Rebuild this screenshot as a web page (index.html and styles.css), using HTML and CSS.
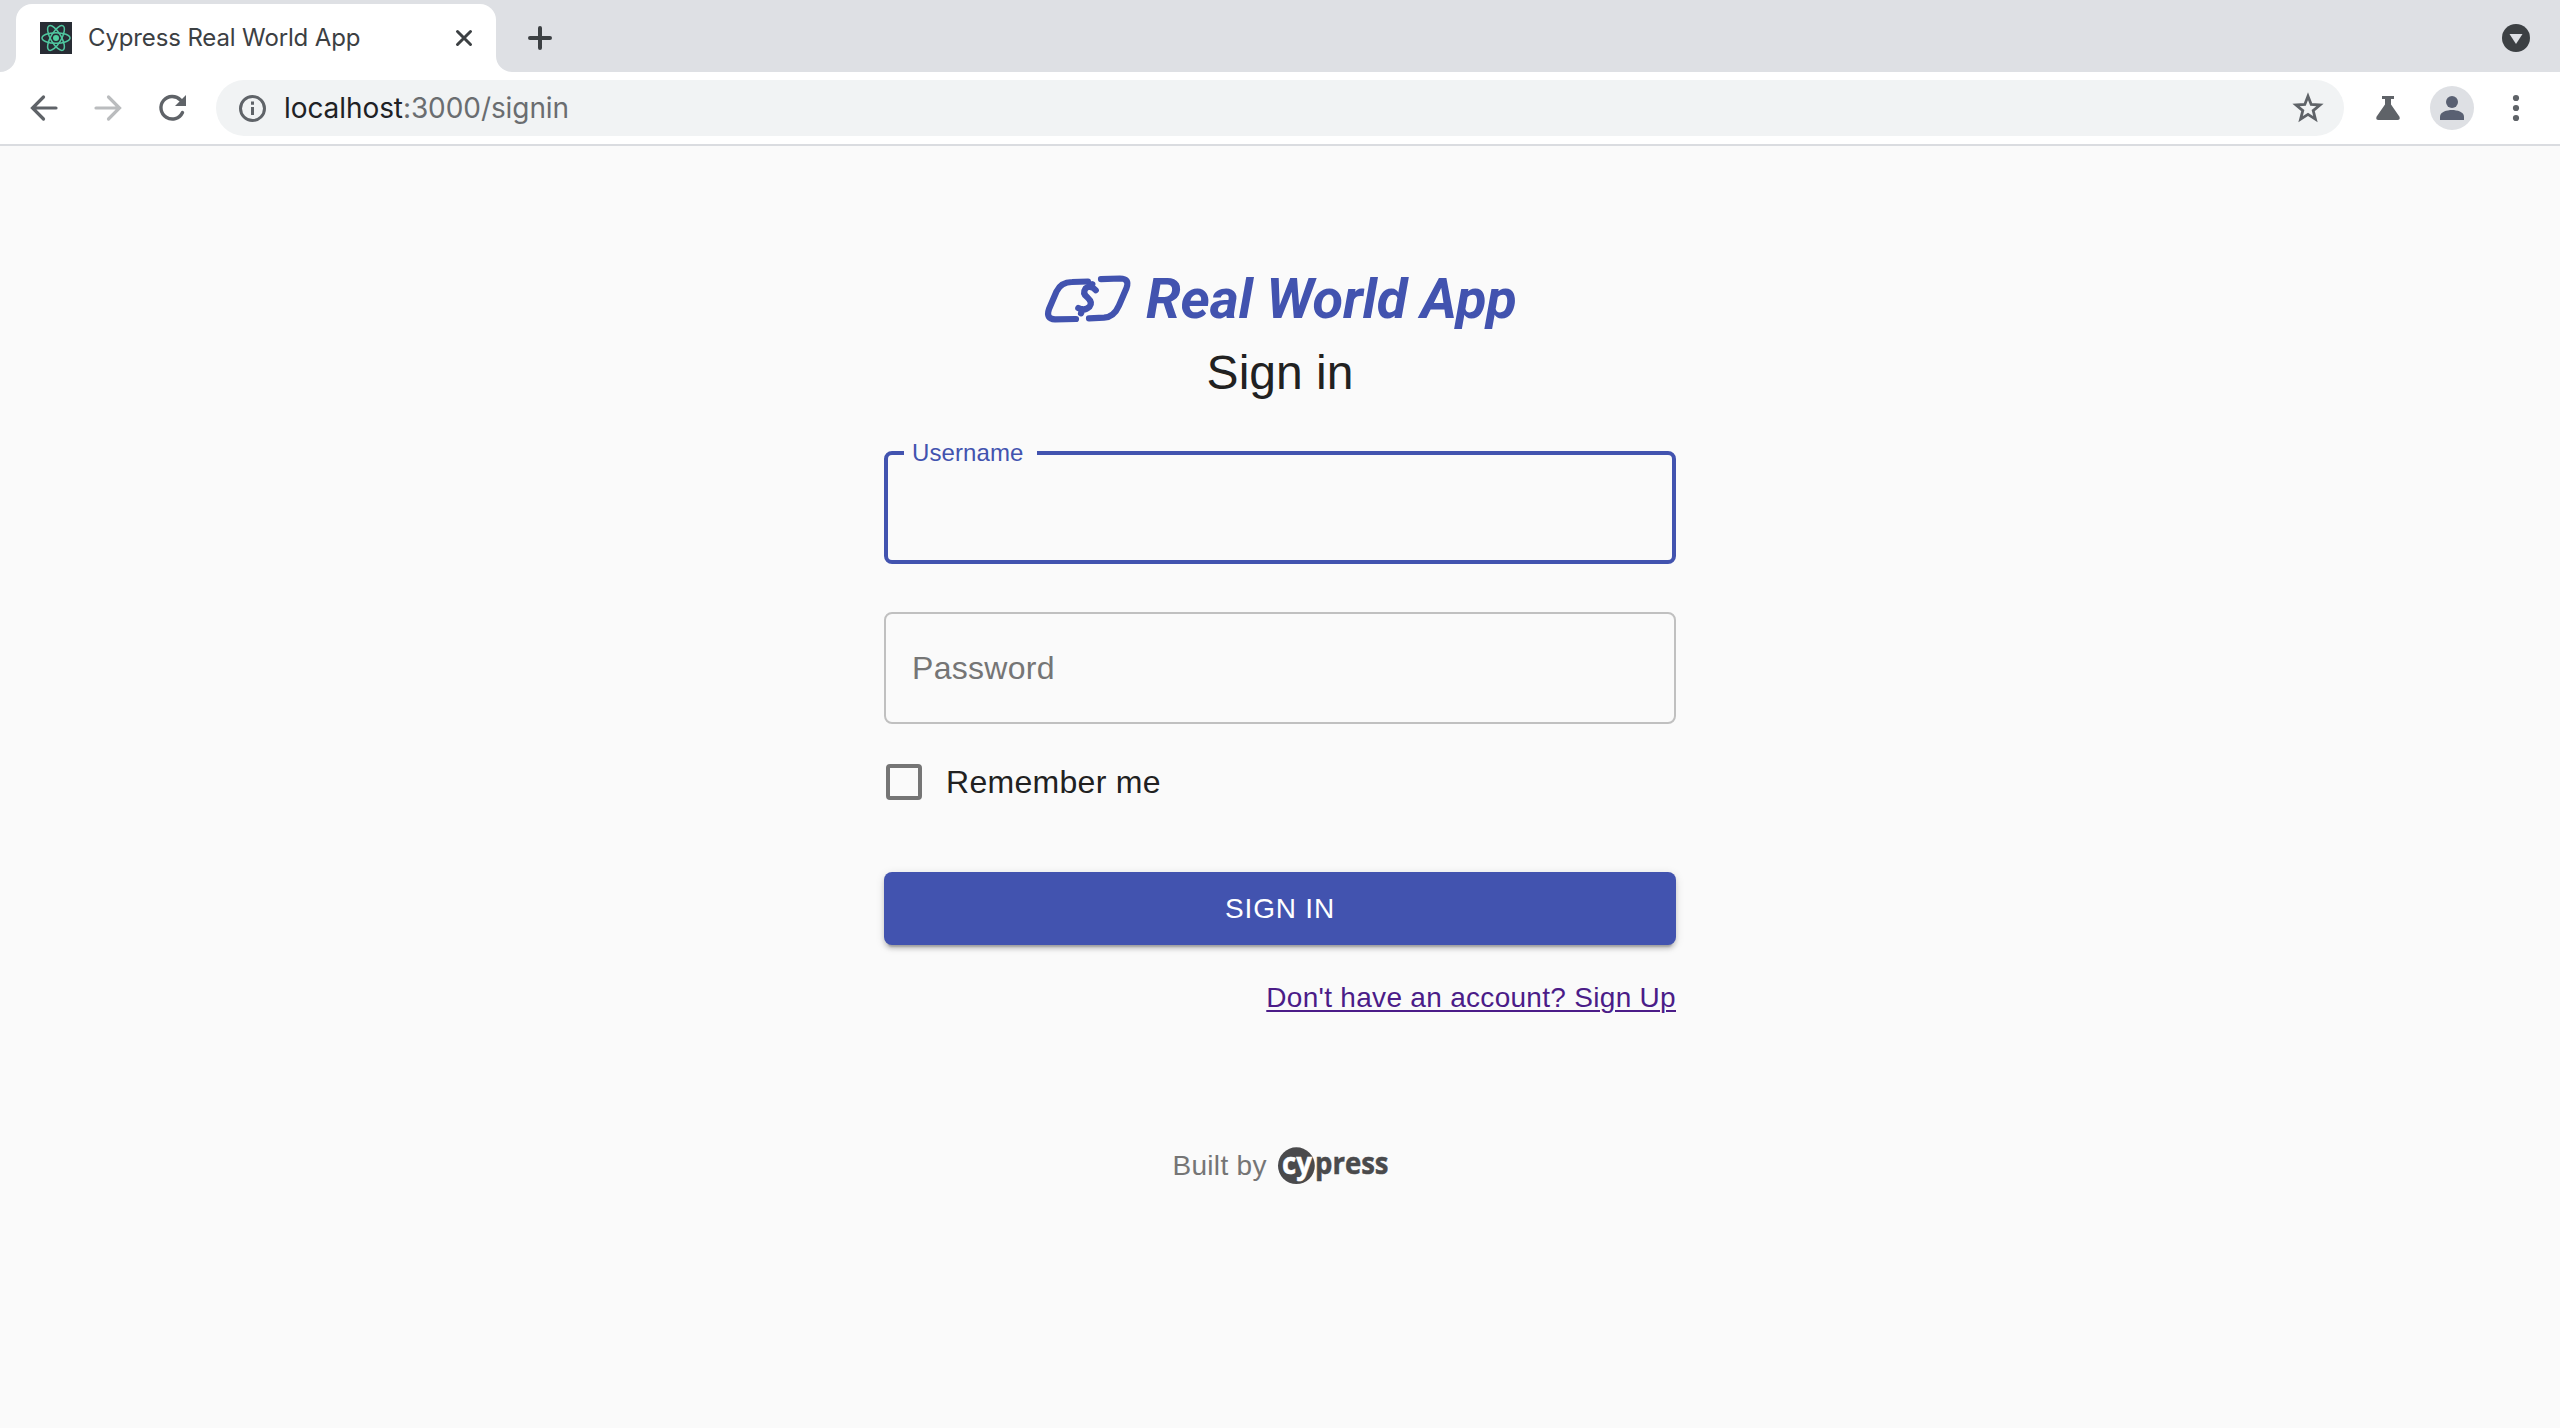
FILE: index.html
```html
<!DOCTYPE html>
<html lang="en">
<head>
<meta charset="utf-8">
<title>Cypress Real World App</title>
<link rel="stylesheet" href="styles.css">
</head>
<body>
<header class="tabstrip">
  <svg class="tab-foot" width="16" height="16" viewBox="0 0 16 16"><path d="M16 0v16H0A16 16 0 0 0 16 0z"/></svg>
  <div class="tab">
    <svg class="favicon" width="32" height="32" viewBox="0 0 32 32">
      <path fill="#282c34" d="M0 0h32v32H0z"/>
      <circle cx="16" cy="16" r="3" fill="#50d0a0"/>
      <g fill="none" stroke="#50c8a0" stroke-width="1.5">
        <ellipse cx="16" cy="16" rx="14" ry="5.3"/>
        <ellipse cx="16" cy="16" rx="14" ry="5.3" transform="rotate(60 16 16)"/>
        <ellipse cx="16" cy="16" rx="14" ry="5.3" transform="rotate(120 16 16)"/>
      </g>
    </svg>
    <span class="tab-title">Cypress Real World App</span>
    <svg class="tab-close" width="16" height="16" viewBox="0 0 16 16"><path d="M1.5 1.5l13 13m0-13l-13 13"/></svg>
  </div>
  <svg class="tab-foot" width="16" height="16" viewBox="0 0 16 16"><path d="M0 0v16h16A16 16 0 0 1 0 0z"/></svg>
  <svg class="new-tab" width="24" height="24" viewBox="0 0 24 24"><path d="M12 2v20M2 12h20"/></svg>
  <svg class="tab-search" width="28" height="28" viewBox="0 0 28 28"><circle cx="14" cy="14" r="14" fill="#3c4043"/><path fill="#dee0e4" d="M7.5 10h13L14 20z"/></svg>
</header>
<nav class="toolbar">
  <svg class="back" width="28" height="28" viewBox="0 0 28 28"><path d="M26 14H3M13.500 3L2.500 14l11 11"/></svg>
  <svg class="forward" width="28" height="28" viewBox="0 0 28 28"><path d="M2 14h23M14.500 3l11 11-11 11"/></svg>
  <svg class="reload" width="28" height="28" viewBox="0 0 28 28"><path class="arc" d="M24.500 18.500A11.300 11.300 0 1 1 22.500 6"/><path class="tip" d="M28 1v11h-11z"/></svg>
  <div class="omnibox">
    <svg class="info" width="28" height="28" viewBox="0 0 28 28"><circle cx="14.500" cy="14.500" r="12"/><path d="M14.500 13v8M14.500 7.500v3.200"/></svg>
    <span class="url">localhost<span class="url-path">:3000/signin</span></span>
    <svg class="star" width="32" height="32" viewBox="0 0 32 32"><path d="M16 4.200l3.200 8.200 8.800.6-6.800 5.600 2.200 8.500L16 22.400l-7.400 4.700 2.200-8.500L4 13l8.800-.6z"/></svg>
  </div>
  <svg class="flask" width="24" height="24" viewBox="0 0 24 24"><path d="M6 0h12v3h-3v5.500l8.500 12.300q1 3.200-2 3.200h-19q-3 0-2-3.200L9 8.500V3H6z"/></svg>
  <svg class="avatar" width="44" height="44" viewBox="0 0 44 44"><circle cx="22" cy="22" r="22" fill="#dee0e4"/><g fill="#596072"><circle cx="22" cy="16" r="6"/><path d="M10 34v-3.500c0-4.500 7-6.500 12-6.500s12 2 12 6.500V34z"/></g></svg>
  <svg class="menu" width="8" height="28" viewBox="0 0 8 28"><circle cx="4" cy="4" r="3.100"/><circle cx="4" cy="14" r="3.100"/><circle cx="4" cy="24" r="3.100"/></svg>
</nav>
<main class="page">
  <div class="brand">
    <svg class="brand-mark" width="88" height="52" viewBox="0 0 88 52">
      <path d="M44 8.500L28 9Q17 9 12.500 18.500L5 36Q1.500 46 11 46.300L32 46"/>
      <path d="M57 6.200L76 5.500Q86 5.500 82.500 15L75 32.500Q70 44 60 44.700L45 45.300"/>
      <path d="M51.800 17.300Q46 10.800 41.500 15.500 38 20.500 43.500 24.500 49 29.500 45.500 33.800 40.500 38.500 34.300 35M48.300 11.300l-1.500 2.700M37 40.300l1.500-4"/>
    </svg>
    <span class="brand-name">Real World App</span>
  </div>
  <h1 class="heading">Sign in</h1>
  <form class="form">
    <fieldset class="field focused"><legend class="legend">Username</legend></fieldset>
    <div class="field password">Password</div>
    <div class="remember"><span class="box"></span><span>Remember me</span></div>
    <div class="submit">SIGN IN</div>
    <a class="signup">Don't have an account? Sign Up</a>
  </form>
  <footer class="footer">
    <span>Built by</span>
    <svg class="cypress" width="108" height="44" viewBox="0 0 108 44">
      <circle cx="16.400" cy="21.700" r="18.400" fill="#4a4a4c"/>
      <text x="2" y="29.700" textLength="30" fill="#fff" stroke="#fff" lengthAdjust="spacingAndGlyphs">cy</text>
      <text x="35" y="29.700" textLength="73.500" lengthAdjust="spacingAndGlyphs" fill="#4a4a4c" stroke="#4a4a4c">press</text>
    </svg>
  </footer>
</main>
</body>
</html>
```
FILE: styles.css
```css
* { box-sizing: border-box; }
body { margin: 0; width: 2560px; height: 1428px; overflow: hidden; background: #fafafa; color: #212121; font-family: "Liberation Sans", Arial, sans-serif; }
svg { display: block; flex: none; overflow: visible; }
.tabstrip { display: flex; height: 72px; background: #dee0e4; align-items: flex-end; padding-right: 30px; }
.tab-foot { fill: #fff; }
.tab { display: flex; align-items: center; width: 480px; height: 68px; padding: 0 24px; background: #fff; border-radius: 16px 16px 0 0; }
.tab-title { flex: 1; margin-left: 16px; color: #3c4043; font: 24px/32px Inter, sans-serif; letter-spacing: -.13px; white-space: nowrap; }
.tab-close { stroke: #3c4043; stroke-width: 3; stroke-linecap: round; }
.new-tab { margin: 0 0 22px 16px; stroke: #3c4043; stroke-width: 4; stroke-linecap: round; }
.tab-search { margin: 0 0 20px auto; }
.toolbar { display: flex; align-items: center; height: 74px; padding: 0 40px 0 30px; background: #fff; border-bottom: 2px solid #dadce0; }
.back, .forward { fill: none; stroke: #5f6368; stroke-width: 3.2; stroke-linecap: round; }
.forward { margin-left: 36px; stroke: #babcbe; }
.reload { margin-left: 36px; }
.arc { fill: none; stroke: #5f6368; stroke-width: 3.4; stroke-linecap: round; }
.tip { fill: #5f6368; }
.omnibox { display: flex; align-items: center; width: 2128px; height: 56px; margin-left: 30px; padding: 0 20px 0 22px; background: #f1f3f4; border-radius: 28px; }
.info { fill: none; stroke: #5f6368; stroke-width: 3; }
.url { flex: 1; margin-left: 18px; color: #202124; font: 28px/36px Inter, sans-serif; letter-spacing: -.08px; }
.url-path { color: #6a6d70; }
.star { fill: none; stroke: #5f6368; stroke-width: 2.8; }
.flask { margin-left: 32px; fill: #5f6368; }
.avatar { margin-left: 30px; }
.menu { margin-left: 38px; fill: #5f6368; }
.page { display: flex; flex-direction: column; align-items: center; padding-top: 124px; }
.brand { display: flex; width: 472px; height: 68px; }
.brand-mark { fill: none; stroke: #4253af; stroke-width: 6.2; stroke-linecap: round; stroke-linejoin: round; margin-top: 3px; }
.brand-name { margin-left: 14px; color: #4253af; font: italic bold 56px/58px Roboto, sans-serif; letter-spacing: -.25px; white-space: nowrap; }
.heading { margin: 3px 0 0; font-size: 48px; font-weight: 400; line-height: 64px; }
.form { display: flex; flex-direction: column; width: 792px; margin-top: 34px; }
.field { width: 792px; height: 112px; margin: 0; border-radius: 8px; }
.focused { height: 125px; padding: 0 0 0 16px; border: 4px solid #4253af; }
.legend { padding: 0 13px 0 8px; color: #4253af; font-size: 24px; line-height: 28px; letter-spacing: .1px; }
.password { display: flex; align-items: center; margin-top: 48px; padding-left: 26px; border: 2px solid #c0c0c0; color: #757575; font-size: 32px; letter-spacing: .3px; }
.remember { display: flex; align-items: center; gap: 24px; height: 40px; margin: 38px 0 0 2px; font-size: 32px; letter-spacing: .3px; }
.box { width: 36px; height: 36px; border: 4px solid #757575; border-radius: 4px; }
.submit { height: 73px; margin-top: 70px; border-radius: 8px; background: #4253af; color: #fff; font-size: 28px; line-height: 73px; letter-spacing: .8px; text-align: center; box-shadow: 0 6px 2px -4px rgba(0,0,0,.2), 0 4px 4px rgba(0,0,0,.14), 0 2px 10px rgba(0,0,0,.12); }
.signup { align-self: flex-end; margin-top: 36px; color: #4b1c88; font-size: 28px; line-height: 34px; letter-spacing: .3px; text-decoration: underline 2px; text-underline-offset: 3px; }
.footer { display: flex; align-items: center; width: 215px; margin-top: 129px; justify-content: space-between; color: #757575; font-size: 28px; letter-spacing: .3px; white-space: nowrap; }
.cypress { font: bold 30px "Open Sans", sans-serif; letter-spacing: 0; stroke-width: .5; }
```
